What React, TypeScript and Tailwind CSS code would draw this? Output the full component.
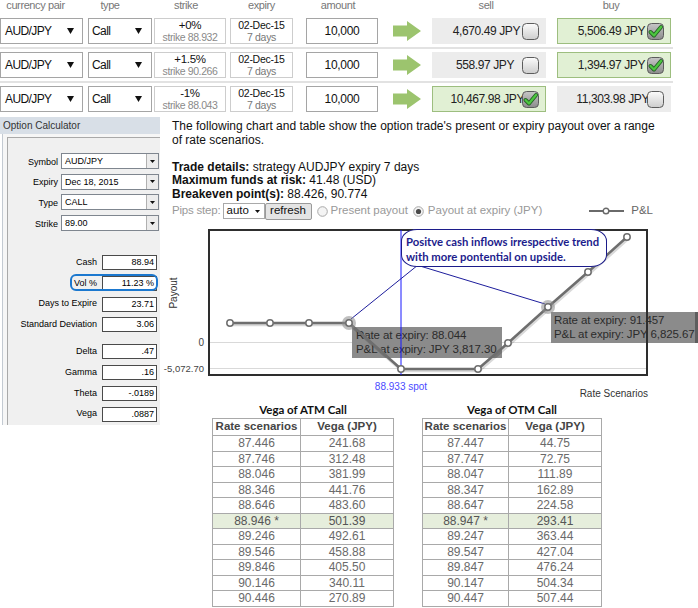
import React from "react";

const Tri = () => (
  <svg width="7" height="6" viewBox="0 0 7 6" className="shrink-0">
    <path d="M0 0H7L3.5 6Z" fill="#111" />
  </svg>
);

const SmallTri = () => (
  <svg width="5" height="3" viewBox="0 0 5 3">
    <path d="M0 0H5L2.5 3Z" fill="#111" />
  </svg>
);

function Checkbox({ checked }: { checked?: boolean }) {
  const id = checked ? "cbOn" : "cbOff";
  return (
    <svg width="17" height="17" viewBox="0 0 17 17" className="shrink-0">
      <defs>
        <linearGradient id={id} x1="0" y1="0" x2="0" y2="1">
          {checked ? (
            <>
              <stop offset="0" stopColor="#c6c6c6" />
              <stop offset="1" stopColor="#8c8c8c" />
            </>
          ) : (
            <>
              <stop offset="0" stopColor="#fcfcfc" />
              <stop offset="1" stopColor="#cdcdcd" />
            </>
          )}
        </linearGradient>
      </defs>
      <rect x="0.5" y="0.5" width="16" height="16" rx="4" fill={`url(#${id})`} stroke="#5c5c5c" />
      {checked && (
        <>
          <path d="M3.5 9 L7 12.5 L14 4" stroke="#235f23" strokeWidth="4" fill="none" strokeLinecap="round" strokeLinejoin="round" />
          <path d="M3.5 9 L7 12.5 L14 4" stroke="#4cc63f" strokeWidth="2.3" fill="none" strokeLinecap="round" strokeLinejoin="round" />
        </>
      )}
    </svg>
  );
}

type Row = {
  pct: string;
  strike: string;
  sell: string;
  buy: string;
  sellOn: boolean;
  buyOn: boolean;
  sellMr: string;
  buyMr: string;
};

const rows: Row[] = [
  { pct: "+0%", strike: "strike 88.932", sell: "4,670.49 JPY", buy: "5,506.49 JPY", sellOn: false, buyOn: true, sellMr: "mr-[2px]", buyMr: "mr-[2px]" },
  { pct: "+1.5%", strike: "strike 90.266", sell: "558.97 JPY", buy: "1,394.97 JPY", sellOn: false, buyOn: true, sellMr: "mr-[8px]", buyMr: "mr-[2px]" },
  { pct: "-1%", strike: "strike 88.043", sell: "10,467.98 JPY", buy: "11,303.98 JPY", sellOn: true, buyOn: false, sellMr: "mr-[-2px]", buyMr: "mr-[-2px]" },
];

function PriceBox({ text, on, mr }: { text: string; on: boolean; mr: string }) {
  return (
    <div
      className={
        on
          ? "w-[114px] h-[26px] flex items-center justify-end pr-[6px] bg-[#e1f0d4] border border-[#9dbe7f]"
          : "w-[114px] h-[26px] flex items-center justify-end pr-[7px] bg-[#ececec]"
      }
    >
      <span className={"text-[12px] tracking-[-0.4px] text-[#222] " + mr}>{text}</span>
      <Checkbox checked={on} />
    </div>
  );
}

function CalcSelect({ label, value }: { label: string; value: string }) {
  return (
    <div className="flex items-center h-[16px]">
      <div className="w-[50px] text-right pt-[3px]">{label}</div>
      <div className="ml-[3px] w-[98px] h-[16px] shrink-0 bg-white border border-[#7f868f] flex">
        <div className="flex-1 pl-[3px] leading-[14px]">{value}</div>
        <div className="w-[12px] border-l border-[#b0b0b0] bg-[#ececec] flex items-center justify-center">
          <SmallTri />
        </div>
      </div>
    </div>
  );
}

function CalcInput({ label, value }: { label: string; value: string }) {
  return (
    <div className="flex items-center h-[15px]">
      <div className="w-[89px] text-right">{label}</div>
      <div className="ml-[5px] w-[55px] h-[15px] shrink-0 bg-white border border-[#4a4a4a] text-right pr-[2px] leading-[13px]">
        {value}
      </div>
    </div>
  );
}

const atm = [
  ["87.446", "241.68"],
  ["87.746", "312.48"],
  ["88.046", "381.99"],
  ["88.346", "441.76"],
  ["88.646", "483.60"],
  ["88.946 *", "501.39"],
  ["89.246", "492.61"],
  ["89.546", "458.88"],
  ["89.846", "405.50"],
  ["90.146", "340.11"],
  ["90.446", "270.89"],
];
const otm = [
  ["87.447", "44.75"],
  ["87.747", "72.75"],
  ["88.047", "111.89"],
  ["88.347", "162.89"],
  ["88.647", "224.58"],
  ["88.947 *", "293.41"],
  ["89.247", "363.44"],
  ["89.547", "427.04"],
  ["89.847", "476.24"],
  ["90.147", "504.34"],
  ["90.447", "507.44"],
];

function VegaTable({ title, data, c1 }: { title: string; data: string[][]; c1: string }) {
  return (
    <div className="flex flex-col">
      <div className="h-[16px] leading-[16px] text-center font-['Lato',sans-serif] font-bold text-[11.5px] text-[#111]">{title}</div>
      <div className="border-t border-l border-[#a9a9a9] text-[12px]">
        <div className="flex h-[17px] font-bold text-[11.5px] text-[#454545] whitespace-nowrap">
          <div className={c1 + " border-r border-b border-[#a9a9a9] flex items-center justify-center"}>Rate scenarios</div>
          <div className="w-[93px] border-r border-b border-[#a9a9a9] flex items-center justify-center">Vega (JPY)</div>
        </div>
        {data.map((r, i) => (
          <div key={i} className={i === 5 ? "flex h-[15.5px] text-[#555] bg-[#e6eedc]" : "flex h-[15.5px] text-[#6a6a6a]"}>
            <div className={c1 + " border-r border-b border-[#a9a9a9] flex items-center justify-center leading-[12px]"}>{r[0]}</div>
            <div className="w-[93px] border-r border-b border-[#a9a9a9] flex items-center justify-center leading-[12px]">{r[1]}</div>
          </div>
        ))}
      </div>
    </div>
  );
}

const pts: [number, number][] = [
  [230, 322],
  [270, 322],
  [309, 322],
  [349, 322],
  [401, 368],
  [478, 368],
  [508, 342],
  [548, 306],
  [588, 271],
  [627, 236],
];

function Radio({ on }: { on?: boolean }) {
  return (
    <svg width="11" height="11" viewBox="0 0 11 11" className="shrink-0">
      <circle cx="5.5" cy="5.5" r="4.8" fill="#f4f4f4" stroke="#a8a8a8" />
      {on && <circle cx="5.5" cy="5.5" r="2.6" fill="#4a4a4a" />}
    </svg>
  );
}

export default function App() {
  const polyline = pts.map((p) => p.join(",")).join(" ");
  return (
    <div className="relative w-[698px] h-[608px] overflow-hidden bg-white font-['Liberation_Sans',Arial,sans-serif] text-[#111]">
      {/* top order table */}
      <div className="flex h-[15px] text-[11px] leading-[11px] text-[#777] tracking-[-0.4px]">
        <div className="w-[83px] text-center pr-[12px]">currency pair</div>
        <div className="ml-[5px] w-[64px] text-center pr-[20px]">type</div>
        <div className="ml-[2px] w-[72px] text-center pr-[8px]">strike</div>
        <div className="ml-[4px] w-[63px] text-center">expiry</div>
        <div className="ml-[13px] w-[72px] text-center pr-[8px]">amount</div>
        <div className="ml-[15px] w-[28px]" />
        <div className="ml-[11px] w-[114px] text-center pr-[6px]">sell</div>
        <div className="ml-[11px] w-[114px] text-center pr-[6px]">buy</div>
      </div>
      {rows.map((r, i) => (
        <React.Fragment key={i}>
          {i > 0 && <div className="w-[673px] h-[2px] bg-[#e2e2e2]" />}
          <div className="flex items-center h-[32px]">
            <div className="w-[83px] h-[26px] border border-[#a5a5a5] bg-white flex items-center justify-between pl-[4px] pr-[8px] text-[12px] tracking-[-0.6px]">
              <span>AUD/JPY</span>
              <Tri />
            </div>
            <div className="ml-[5px] w-[64px] h-[26px] border border-[#a5a5a5] bg-white flex items-center justify-between pl-[3px] pr-[9px] text-[12px] tracking-[-0.6px]">
              <span>Call</span>
              <Tri />
            </div>
            <div className="ml-[2px] w-[72px] h-[26px] border border-[#cdcdcd] bg-white flex flex-col items-center justify-center leading-[12px]">
              <span className="text-[11.5px] tracking-[-0.3px]">{r.pct}</span>
              <span className="text-[10.5px] tracking-[-0.4px] text-[#8a8a8a]">{r.strike}</span>
            </div>
            <div className="ml-[4px] w-[63px] h-[26px] border border-[#cdcdcd] bg-white flex flex-col items-center justify-center leading-[12px] text-[10.5px] tracking-[-0.3px]">
              <span>02-Dec-15</span>
              <span className="text-[#777]">7 days</span>
            </div>
            <div className="ml-[13px] w-[72px] h-[26px] border border-[#a5a5a5] bg-white flex items-center justify-center text-[12px] tracking-[-0.3px]">
              10,000
            </div>
            <div className="ml-[15px] w-[28px] h-[20px]">
              <svg width="28" height="20" viewBox="0 0 28 20">
                <path d="M0 4.5H14V0L28 10L14 20V15.5H0Z" fill="#9cc46e" />
              </svg>
            </div>
            <div className="ml-[11px]">
              <PriceBox text={r.sell} on={r.sellOn} mr={r.sellMr} />
            </div>
            <div className="ml-[11px]">
              <PriceBox text={r.buy} on={r.buyOn} mr={r.buyMr} />
            </div>
          </div>
        </React.Fragment>
      ))}

      {/* main */}
      <div className="flex items-start">
        {/* option calculator */}
        <div className="w-[160px] h-[310px] shrink-0 pt-[2px] flex flex-col overflow-hidden">
          <div className="h-[17px] bg-[#d8dfe7] pl-[3px] text-[10px] leading-[17px] text-[#333]">Option Calculator</div>
          <div className="flex-1 ml-[2px] border-l border-[#c3cad2] pl-[4px] pt-[3px] bg-[#f6f6f6] flex flex-col">
            <div className="relative flex-1 border-l border-t border-[#a9a9a9] bg-[#f0f0f0] text-[9px] text-black">
              <div className="pt-[15px] flex flex-col gap-[4.7px]">
                <CalcSelect label="Symbol" value="AUD/JPY" />
                <CalcSelect label="Expiry" value="Dec 18, 2015" />
                <CalcSelect label="Type" value="CALL" />
                <CalcSelect label="Strike" value="89.00" />
              </div>
              <div className="mt-[24px] flex flex-col gap-[5.8px]">
                <CalcInput label="Cash" value="88.94" />
                <CalcInput label="Vol %" value="11.23 %" />
                <CalcInput label="Days to Expire" value="23.71" />
                <CalcInput label="Standard Deviation" value="3.06" />
              </div>
              <div className="mt-[12px] flex flex-col gap-[5.7px]">
                <CalcInput label="Delta" value=".47" />
                <CalcInput label="Gamma" value=".16" />
                <CalcInput label="Theta" value="-.0189" />
                <CalcInput label="Vega" value=".0887" />
              </div>
              <div className="absolute left-[62px] top-[136px] w-[88px] h-[17px] border-2 border-[#1b78cf] rounded-[6px]" />
            </div>
          </div>
        </div>

        {/* right column */}
        <div className="flex-1 pl-[12px] pt-[5px] text-[12px] leading-[13.5px] text-[#111]">
          <p className="whitespace-nowrap">
            The following chart and table show the option trade's present or expiry payout over a range
            <br />
            of rate scenarios.
          </p>
          <div className="mt-[13.5px]">
            <div>
              <b>Trade details:</b> strategy AUDJPY expiry 7 days
            </div>
            <div>
              <b>Maximum funds at risk:</b> 41.48 (USD)
            </div>
            <div>
              <b>Breakeven point(s):</b> 88.426, 90.774
            </div>
          </div>
          <div className="mt-[1px] h-[18px] flex items-center text-[11.5px] text-[#999] whitespace-nowrap">
            <span className="tracking-[-0.2px]">Pips step:</span>
            <div className="ml-[2px] w-[42px] h-[16px] border border-[#a9a9a9] bg-white flex items-center justify-between pl-[3px] pr-[4px] text-[#111]">
              <span>auto</span>
              <SmallTri />
            </div>
            <div className="w-[47px] h-[17px] border border-[#9a9a9a] bg-[#e4e4e4] rounded-[2px] flex items-center justify-center text-[#111]">
              refresh
            </div>
            <div className="ml-[5px] flex items-center gap-[3px]">
              <Radio />
              <span>Present payout</span>
            </div>
            <div className="ml-[5px] flex items-center gap-[4px]">
              <Radio on />
              <span>Payout at expiry (JPY)</span>
            </div>
            <div className="ml-[47px] flex items-center gap-[7px] text-[#666]">
              <svg width="35" height="8" viewBox="0 0 35 8">
                <line x1="0" y1="4" x2="35" y2="4" stroke="#6a6a6a" strokeWidth="2" />
                <circle cx="17" cy="4" r="2.8" fill="#fff" stroke="#6a6a6a" strokeWidth="1.4" />
              </svg>
              <span>P&amp;L</span>
            </div>
          </div>

          {/* chart */}
          <div className="relative -ml-[12px] w-[538px] h-[182px]">
            <svg className="absolute left-0 top-0" width="538" height="182" viewBox="160 219 538 182">
              <line x1="209" y1="341.5" x2="647" y2="341.5" stroke="#d9d9d9" strokeWidth="1" />
              <line x1="209" y1="367.5" x2="647" y2="367.5" stroke="#d9d9d9" strokeWidth="1" />
            </svg>
            <div className="absolute left-[192px] top-[107px] w-[150px] h-[31px] bg-[#8b8b8b] pl-[4px] pt-[1px] text-[11.5px] leading-[14px] text-[#2b2b2b] whitespace-nowrap tracking-[-0.1px]">
              Rate at expiry: 88.044
              <br />
              P&amp;L at expiry: JPY 3,817.30
            </div>
            <div className="absolute left-[391px] top-[92px] w-[147px] h-[31px] bg-[#8b8b8b] border-r-[3px] border-[#5e5e5e] pl-[3px] pt-[1px] text-[11.5px] leading-[14px] text-[#2b2b2b] whitespace-nowrap tracking-[-0.1px]">
              Rate at expiry: 91.457
              <br />
              P&amp;L at expiry: JPY 6,825.67
            </div>
            <svg className="absolute left-0 top-0" width="538" height="182" viewBox="160 219 538 182">
              <rect x="209" y="229" width="438" height="145" fill="none" stroke="#2e2e2e" strokeWidth="2" />
              <line x1="401" y1="229" x2="401" y2="374" stroke="#1818ff" strokeWidth="1" />
              <line x1="418" y1="264" x2="351" y2="318" stroke="#1d1d9c" strokeWidth="1" />
              <line x1="420" y1="265" x2="545" y2="303" stroke="#1d1d9c" strokeWidth="1" />
              <polyline points={polyline} transform="translate(1 1.5)" fill="none" stroke="rgba(0,0,0,0.15)" strokeWidth="3.5" />
              <polyline points={polyline} fill="none" stroke="#6e6e6e" strokeWidth="2.5" strokeLinejoin="round" />
              <circle cx="349" cy="322" r="7" fill="#8a8a8a" fillOpacity="0.55" />
              <circle cx="548" cy="306" r="7" fill="#8a8a8a" fillOpacity="0.55" />
              {pts.map((p, i) => (
                <circle key={i} cx={p[0]} cy={p[1]} r="3.2" fill="#fff" stroke="#6e6e6e" strokeWidth="1.5" />
              ))}
              <text x="204" y="345" textAnchor="end" fontSize="10" fill="#444" fontFamily="Liberation Sans, Arial, sans-serif">0</text>
              <text x="204" y="371" textAnchor="end" fontSize="9.5" fill="#444" fontFamily="Liberation Sans, Arial, sans-serif">-5,072.70</text>
              <text transform="translate(177 292) rotate(-90)" textAnchor="middle" fontSize="10" fill="#333" fontFamily="Liberation Sans, Arial, sans-serif">Payout</text>
              <text x="401" y="389" textAnchor="middle" fontSize="10" fill="#4a4aff" fontFamily="Liberation Sans, Arial, sans-serif">88.933 spot</text>
              <text x="648" y="396" textAnchor="end" fontSize="10" fill="#333" fontFamily="Liberation Sans, Arial, sans-serif">Rate Scenarios</text>
            </svg>
            <div className="absolute left-[241px] top-[9px] w-[206px] h-[38px] bg-white border border-[#1c1c8a] rounded-[16px/12px] pl-[4px] pt-[4px] font-['Lato',sans-serif] font-bold text-[11.3px] leading-[15px] text-[#1c1c8c] whitespace-nowrap">
              Positve cash inflows irrespective trend
              <br />
              with more pontential on upside.
            </div>
          </div>

          {/* tables */}
          <div className="flex ml-[40px] gap-[28px]">
            <VegaTable title="Vega of ATM Call" data={atm} c1="w-[88px]" />
            <VegaTable title="Vega of OTM Call" data={otm} c1="w-[86px]" />
          </div>
        </div>
      </div>
    </div>
  );
}
